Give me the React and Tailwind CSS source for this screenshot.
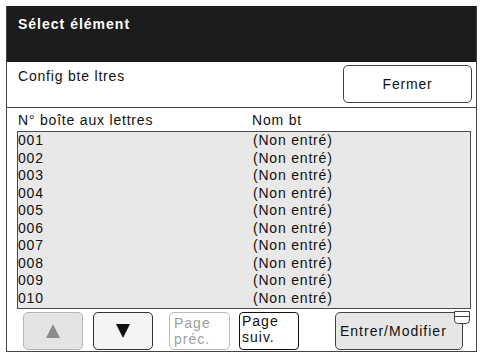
import React from 'react'

const rows = ['001', '002', '003', '004', '005', '006', '007', '008', '009', '010']

function Triangle({ up, color }) {
  return (
    <svg width="16" height="16" viewBox="0 0 16 16">
      {up ? (
        <polygon points="8,1 15,15 1,15" fill={color} />
      ) : (
        <polygon points="1,1 15,1 8,15" fill={color} />
      )}
    </svg>
  )
}

export default function App() {
  const font = { fontFamily: '"Liberation Sans", Arial, sans-serif' }
  return (
    <div className="w-[482px] h-[356px] bg-white pt-[6px] pl-[6px] pr-[5px] pb-[4px]" style={font}>
      <div className="h-full flex flex-col border-l border-r border-b border-[#444]">
        {/* Header */}
        <div className="h-[56px] shrink-0 bg-[#1c1c1c] text-white pl-[11px] pt-[10px] text-[14px] font-bold leading-[16px] tracking-[1px]">
          Sélect élément
        </div>

        {/* Titre + Fermer */}
        <div className="h-[46px] shrink-0 flex justify-between border-b border-[#444] pl-[11px] pr-[4px]">
          <div className="pt-[6px] text-[14px] leading-[16px] tracking-[0.8px] text-[#111]">Config bte ltres</div>
          <button className="mt-[3px] w-[129px] h-[38px] rounded-[5px] border border-[#444] bg-white text-[14px] tracking-[0.8px] text-[#111]">
            Fermer
          </button>
        </div>

        {/* En-têtes colonnes */}
        <div className="h-[23px] shrink-0 flex pl-[11px] pt-[4px] text-[14px] leading-[16px] tracking-[0.8px] text-[#111]">
          <span className="w-[234px]">N° boîte aux lettres</span>
          <span>Nom bt</span>
        </div>

        {/* Liste */}
        <div className="ml-[10px] mr-[5px] h-[178px] shrink-0 border-[1.5px] border-[#4a4a4a] bg-[#e8e8e8]">
          {rows.map((r) => (
            <div key={r} className="h-[17.5px] flex text-[14px] leading-[17.5px] tracking-[0.8px] text-[#111]">
              <span className="w-[235px]">{r}</span>
              <span>(Non entré)</span>
            </div>
          ))}
        </div>

        {/* Boutons bas */}
        <div className="flex items-start pt-[3px] pl-[16px]">
          <button className="w-[60px] h-[38px] rounded-[5px] border border-[#b5b5b5] bg-[#e4e4e4] flex items-center justify-center">
            <Triangle up color="#8c8c8c" />
          </button>
          <button className="ml-[10px] w-[60px] h-[38px] rounded-[5px] border border-[#333] bg-[#f4f4f4] flex items-center justify-center">
            <Triangle color="#111" />
          </button>
          <button className="ml-[16px] w-[61px] h-[38px] rounded-[5px] border border-[#bbb] bg-white pl-[4px] pt-[2px] flex flex-col items-start text-[14px] leading-[16px] tracking-[1px] text-[#a0a0a0]">
            <span>Page</span>
            <span>préc.</span>
          </button>
          <button className="ml-[9px] w-[60px] h-[38px] rounded-[4px] border-[1.5px] border-[#111] bg-white pl-[2px] flex flex-col items-start text-[14px] leading-[16px] tracking-[1px] text-[#111]">
            <span>Page</span>
            <span>suiv.</span>
          </button>
          <div className="relative ml-[36px]">
            <button className="w-[128px] h-[38px] rounded-[5px] border border-[#444] bg-[#e6e6e6] text-left pl-[4px] text-[14px] tracking-[1px] text-[#111]">
              Entrer/Modifier
            </button>
            <svg className="absolute left-[118px] top-[-1px]" width="18" height="14" viewBox="0 0 18 14">
              <path d="M1.5 0.5 H16.5 V9 Q16.5 12.5 13 12.5 H5 Q1.5 12.5 1.5 9 Z" fill="white" stroke="#444" strokeWidth="1" />
              <line x1="1.5" y1="5.5" x2="16.5" y2="5.5" stroke="#444" strokeWidth="1" />
            </svg>
          </div>
        </div>
      </div>
    </div>
  )
}
